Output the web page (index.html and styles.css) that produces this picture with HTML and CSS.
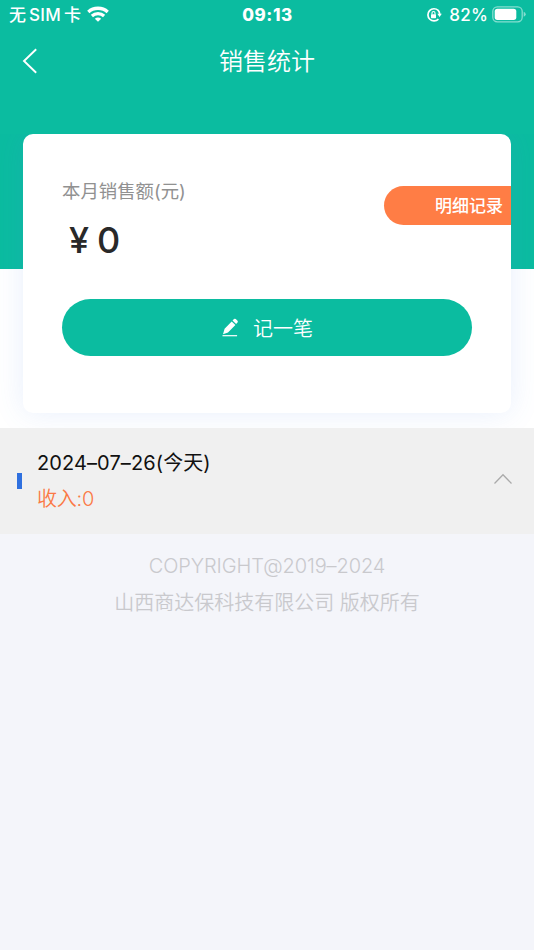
FILE: index.html
```html
<!DOCTYPE html>
<html lang="zh-CN">
<head>
<meta charset="utf-8">
<meta name="viewport" content="width=device-width, initial-scale=1">
<title>销售统计</title>
<link rel="stylesheet" href="styles.css">
</head>
<body>
<div class="hero">
  <header class="status">
    <div class="carrier"><span>无<b class="sim">SIM</b>卡</span>
      <svg class="wifi" width="22" height="16" viewBox="0 0 22 16" fill="none" stroke="#fff" stroke-width="3.300"><path d="M1.300 6C6.600 1 15.400 1 20.700 6M4.900 9.900C8.300 6.900 13.700 6.900 17.100 9.900"/><path d="M11 15.800 7.800 12.700Q11 10.200 14.200 12.700Z" fill="#fff" stroke="none"/></svg>
    </div>
    <div class="time">09:13</div>
    <div class="power">
      <svg class="lock" width="16" height="16" viewBox="0 0 16 16" fill="none" stroke="#fff"><path d="M12.200 3.400A6.100 6.100 0 1 0 12.400 12.100M12.200 3.400A6.100 6.100 0 0 1 13.700 7" stroke-width="1.700"/><path d="M11.300 6.700h4.500l-2.200 3.200z" fill="#fff" stroke="none"/><rect x="5" y="7.200" width="5" height="4" rx=".6" fill="#fff" stroke="none"/><path d="M6 7.500V6a1.500 1.500 0 0 1 3 0v1.500" stroke-width="1.100"/></svg>
      <span class="percent">82%</span>
      <svg class="battery" width="34" height="17" viewBox="0 0 34 17"><rect x=".8" y=".8" width="29.400" height="15" rx="4.500" fill="none" stroke="#fff" stroke-opacity=".5" stroke-width="1.300"/><rect x="2.700" y="2.700" width="21.600" height="11.300" rx="2.700" fill="#fff"/><path d="M31.700 5.800q2 .6 2 2.500t-2 2.500z" fill="#fff" fill-opacity=".5"/></svg>
    </div>
  </header>
  <nav class="nav">
    <svg width="16" height="26" viewBox="0 0 16 26" fill="none" stroke="#fff" stroke-width="1.900"><path d="M14.200 1.300 2 13l12.200 11.700"/></svg>
    <h1>销售统计</h1>
  </nav>
</div>
<section class="summary">
  <div class="card">
    <div class="card-top">
      <div>
        <div class="label">本月销售额(元)</div>
        <div class="amount"><span class="yen">¥</span>0</div>
      </div>
      <a class="detail">明细记录</a>
    </div>
    <a class="record">
      <svg width="18" height="20" viewBox="0 0 18 20" fill="#fff"><path d="M3.600 10.700 10.700 3.400 14.400 7 7 14.400 2 16.200zM11.500 2.600 13 1.100q.9-.8 1.800 0l1.700 1.700q.8.900 0 1.800L15.100 6.100z"/><path d="M1.500 17.100h14.600v1.200H1.500z"/></svg>
      <span>记一笔</span>
    </a>
  </div>
</section>
<section class="day">
  <i class="marker"></i>
  <div class="day-text"><div class="date">2024–07–26(今天)</div><div class="income">收入:0</div></div>
  <svg class="chevron" width="20" height="12" viewBox="0 0 20 12" fill="none" stroke="#aaa" stroke-width="1.300"><path d="M1.500 10.500 10 1.700l8.500 8.800"/></svg>
</section>
<footer class="footer"><div class="copy">COPYRIGHT@2019–2024</div><div class="company">山西商达保科技有限公司 版权所有</div></footer>
</body>
</html>
```
FILE: styles.css
```css
* { box-sizing: border-box; }
body {
  margin: 0;
  min-height: 950px;
  background: #f4f5fa;
  font-family: Inter, "Noto Sans CJK SC", sans-serif;
}
svg { display: block; flex: none; }
.hero { height: 269px; background: #0bbca0; color: #fff; }
.status {
  display: grid;
  grid-template-columns: 1fr auto 1fr;
  height: 30px;
  padding: 0 8px 0 9px;
  align-items: center;
  font-size: 17px;
  line-height: 30px;
  white-space: nowrap;
}
.carrier { display: flex; align-items: center; gap: 6px; font-weight: 500; }
.sim { margin: 0 3px 0 3px; font-weight: 500; letter-spacing: .3px; }
.wifi { margin-top: -2px; }
.time { font-weight: 800; letter-spacing: .6px; }
.power { display: flex; justify-content: flex-end; align-items: center; }
.percent { margin: 0 4px 0 7px; font-weight: 500; letter-spacing: .2px; }
.battery { margin-top: -2px; }
.nav {
  display: grid;
  grid-template-columns: 16px 1fr 16px;
  align-items: center;
  height: 62px;
  padding: 0 22px;
}
h1 { margin: 0; padding-top: 1px; text-align: center; font-size: 24px; line-height: 60px; font-weight: 350; }
.summary {
  height: 294px;
  margin-top: -135px;
  padding: 0 23px;
  overflow: hidden;
  background: linear-gradient(transparent 135px, #fff 135px);
}
.card {
  height: 279px;
  padding-left: 39px;
  border-radius: 10px;
  background: #fff;
  box-shadow: 0 0 30px rgba(80, 130, 230, .13);
}
.card-top { display: flex; justify-content: space-between; height: 165px; }
.label { margin-top: 42px; font-size: 18.4px; line-height: 30px; color: #919191; }
.amount { margin: 9px 0 0 7px; font-size: 36px; line-height: 50px; font-weight: 500; color: #292929; }
.yen { margin-right: 8px; }
.detail {
  width: 127px;
  height: 39px;
  margin-top: 52px;
  padding-right: 8px;
  border-radius: 20px 0 0 20px;
  background: #ff7d45;
  color: #fff;
  font-size: 17px;
  line-height: 40px;
  text-align: right;
  font-weight: 500;
}
.record {
  display: flex;
  align-items: center;
  justify-content: center;
  gap: 14px;
  width: 410px;
  height: 57px;
  border-radius: 29px;
  background: #0bbca0;
  color: #fff;
  font-size: 20px;
  font-weight: 350;
}
.day { display: flex; align-items: center; height: 106px; padding: 0 21px 0 17px; background: #f0f0f0; }
.marker { width: 5px; height: 16px; margin-right: 15px; background: #2f70df; }
.day-text { flex: 1; font-size: 20px; line-height: 36px; }
.date { color: #111; font-weight: 370; letter-spacing: .1px; }
.income { color: #fb7945; font-weight: 350; letter-spacing: -.2px; }
.chevron { margin-top: -4px; }
.footer { padding-top: 14px; text-align: center; color: #c9c9cd; font-size: 20px; line-height: 37px; font-weight: 350; }
.copy { letter-spacing: -.1px; }
```
